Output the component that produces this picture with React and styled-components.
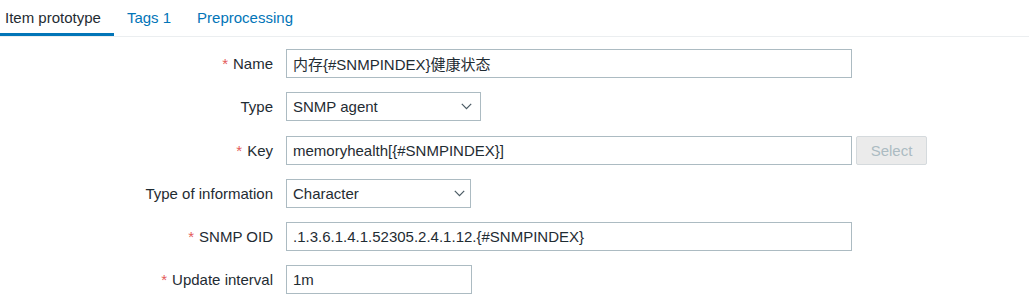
import React from "react";
import styled, { createGlobalStyle } from "styled-components";

const Global = createGlobalStyle`
  html, body { margin: 0; padding: 0; background: #ffffff; }
  body { font-family: "Liberation Sans", Arial, "Noto Sans CJK SC", sans-serif; font-size: 15px; color: #1f2c33; }
  * { box-sizing: border-box; }
`;

const Page = styled.div`
  width: 1029px;
  height: 305px;
  overflow: hidden;
  background: #fff;
`;

const TabBar = styled.div`
  display: flex;
  height: 37px;
  border-bottom: 1px solid #ebeef0;
`;

const Tab = styled.div`
  display: flex;
  align-items: center;
  height: 36px;
  padding: 1px 13px 0 ${(p) => (p.$first ? "5px" : "13px")};
  color: ${(p) => (p.$active ? "#1f2c33" : "#0275b8")};
  border-bottom: 3px solid ${(p) => (p.$active ? "#0275b8" : "transparent")};
  white-space: nowrap;
`;

const Form = styled.div`
  display: grid;
  grid-template-columns: 273px 1fr;
  column-gap: 13px;
  row-gap: 14.3px;
  padding-top: 12px;
`;

const Label = styled.div`
  height: 29px;
  display: flex;
  align-items: center;
  justify-content: flex-end;
  white-space: nowrap;
`;

const Req = styled.span`
  color: #e45959;
  margin-right: 5px;
`;

const Field = styled.div`
  display: flex;
  align-items: center;
  gap: 4px;
`;

const TextBox = styled.div`
  width: ${(p) => p.$w}px;
  height: 29px;
  border: 1px solid #acbbc2;
  background: #fff;
  display: flex;
  align-items: center;
  padding: 0 6px;
  white-space: nowrap;
  overflow: hidden;
`;

const Dropdown = styled(TextBox)`
  justify-content: space-between;
  padding-right: ${(p) => p.$pr}px;
`;

const Chevron = styled.svg`
  width: 11px;
  height: 7px;
  flex: none;
`;

const SelectButton = styled.div`
  width: 71px;
  height: 29px;
  display: flex;
  align-items: center;
  justify-content: center;
  background: #ebebeb;
  border: 1px solid #d5dadd;
  border-radius: 2px;
  color: #acbbc2;
`;

const Down = () => (
  <Chevron viewBox="0 0 11 7">
    <path d="M0.8 0.8 L5.5 5.6 L10.2 0.8" fill="none" stroke="#4a5a63" strokeWidth="1.2" />
  </Chevron>
);

const Row = ({ label, req, children }) => (
  <>
    <Label>
      {req && <Req>*</Req>}
      {label}
    </Label>
    <Field>{children}</Field>
  </>
);

export default function App() {
  return (
    <Page>
      <Global />
      <TabBar>
        <Tab $first $active>Item prototype</Tab>
        <Tab>Tags 1</Tab>
        <Tab>Preprocessing</Tab>
      </TabBar>
      <Form>
        <Row label="Name" req>
          <TextBox $w={566}>内存{"{#SNMPINDEX}"}健康状态</TextBox>
        </Row>
        <Row label="Type">
          <Dropdown $w={195} $pr={8}>
            <span>SNMP agent</span>
            <Down />
          </Dropdown>
        </Row>
        <Row label="Key" req>
          <TextBox $w={566}>memoryhealth[{"{#SNMPINDEX}"}]</TextBox>
          <SelectButton>Select</SelectButton>
        </Row>
        <Row label="Type of information">
          <Dropdown $w={185} $pr={5}>
            <span>Character</span>
            <Down />
          </Dropdown>
        </Row>
        <Row label="SNMP OID" req>
          <TextBox $w={566}>.1.3.6.1.4.1.52305.2.4.1.12.{"{#SNMPINDEX}"}</TextBox>
        </Row>
        <Row label="Update interval" req>
          <TextBox $w={186}>1m</TextBox>
        </Row>
      </Form>
    </Page>
  );
}
